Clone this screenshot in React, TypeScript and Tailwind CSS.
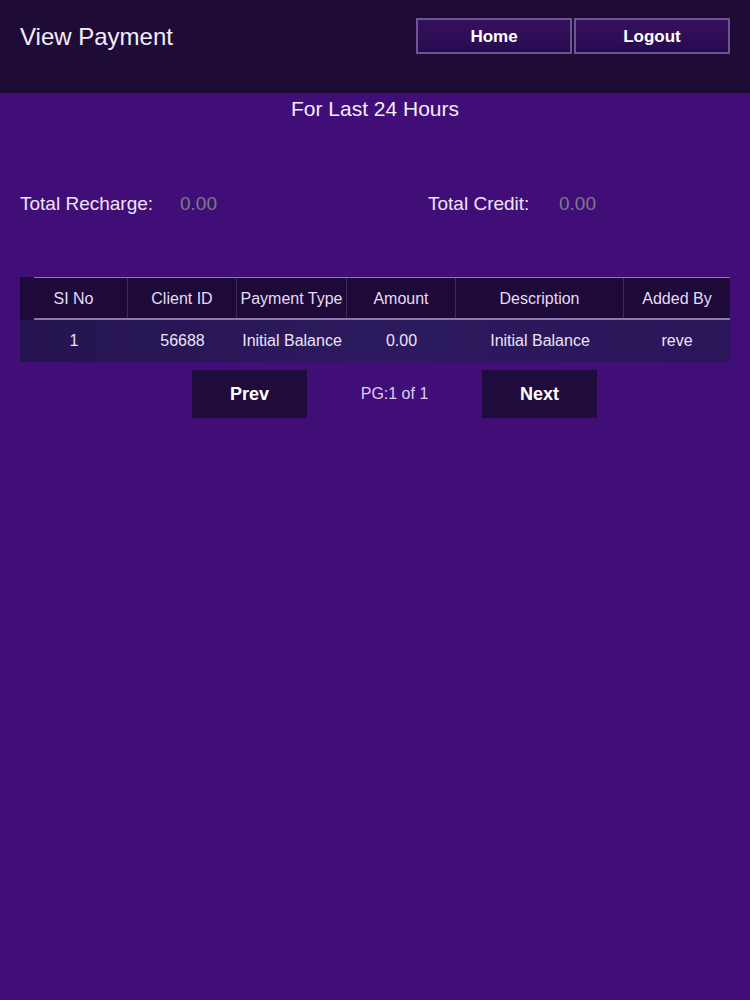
import React from "react";

const rows = [
  {
    sl: "1",
    clientId: "56688",
    type: "Initial Balance",
    amount: "0.00",
    description: "Initial Balance",
    addedBy: "reve",
  },
];

const columns = [
  { label: "SI No", width: "w-[108px]" },
  { label: "Client ID", width: "w-[109px]" },
  { label: "Payment Type", width: "w-[110px]" },
  { label: "Amount", width: "w-[109px]" },
  { label: "Description", width: "w-[168px]" },
  { label: "Added By", width: "flex-1" },
];

export default function App() {
  return (
    <div className="min-h-[1000px] bg-[#410e77] font-['Liberation_Sans',Arial,sans-serif] text-[#f1e9fb]">
      {/* header */}
      <div className="h-[93px] bg-[#1e0c37] flex items-start justify-between pl-5 pr-5 pt-[18px]">
        <h1 className="text-[24px] leading-[40px] text-[#f3ecfb] -mt-[1px]">View Payment</h1>
        <div className="flex gap-[2px]">
          <button className="w-[156px] h-[36px] border-2 border-[#6d5593] bg-gradient-to-b from-[#36105f] to-[#270b4e] text-[17px] leading-[32px] pt-[1px] font-bold text-white">
            Home
          </button>
          <button className="w-[156px] h-[36px] border-2 border-[#6d5593] bg-gradient-to-b from-[#36105f] to-[#270b4e] text-[17px] leading-[32px] pt-[1px] font-bold text-white">
            Logout
          </button>
        </div>
      </div>

      <p className="text-center text-[21px] leading-[30px] mt-[1px] text-[#f3ecfb]">For Last 24 Hours</p>

      {/* totals */}
      <div className="flex px-5 mt-[66px] text-[19px] leading-[28px]">
        <div className="w-[408px] flex">
          <span className="w-[160px] text-[#efe3fb]">Total Recharge:</span>
          <span className="text-[#7c7a86]">0.00</span>
        </div>
        <div className="flex">
          <span className="w-[131px] text-[#efe3fb]">Total Credit:</span>
          <span className="text-[#7c7a86]">0.00</span>
        </div>
      </div>

      {/* table */}
      <div className="mx-5 mt-[59px]">
        <div className="flex h-[43px] bg-[#1d0a38] text-[16px] text-[#e6dcf4] relative">
          <div className="absolute left-[14px] right-0 top-0 h-px bg-[#8c78b0]" />
          <div className="absolute left-[14px] right-0 bottom-0 h-[2px] bg-[#8c78b0]" />
          {columns.map((c, i) => (
            <div
              key={c.label}
              className={`${c.width} flex items-center justify-center ${i < columns.length - 1 ? "border-r border-[#3a2a5c]" : ""}`}
            >
              {c.label}
            </div>
          ))}
        </div>
        {rows.map((r) => (
          <div
            key={r.sl}
            className="flex h-[42px] bg-gradient-to-r from-[#251451] via-[#2c1a5e] to-[#2a1659] text-[16px] text-[#ece4f7]"
          >
            <div className="w-[108px] flex items-center justify-center">{r.sl}</div>
            <div className="w-[109px] flex items-center justify-center">{r.clientId}</div>
            <div className="w-[110px] flex items-center justify-center">{r.type}</div>
            <div className="w-[109px] flex items-center justify-center">{r.amount}</div>
            <div className="w-[168px] flex items-center justify-center">{r.description}</div>
            <div className="flex-1 flex items-center justify-center">{r.addedBy}</div>
          </div>
        ))}
      </div>

      {/* pagination */}
      <div className="flex items-center mt-2 pl-[192px]">
        <button className="w-[115px] h-[48px] bg-[#1f0b3c] text-[18px] font-bold text-white">Prev</button>
        <span className="w-[175px] text-center text-[16px] text-[#dccdf2]">PG:1 of 1</span>
        <button className="w-[115px] h-[48px] bg-[#1f0b3c] text-[18px] font-bold text-white">Next</button>
      </div>
    </div>
  );
}
